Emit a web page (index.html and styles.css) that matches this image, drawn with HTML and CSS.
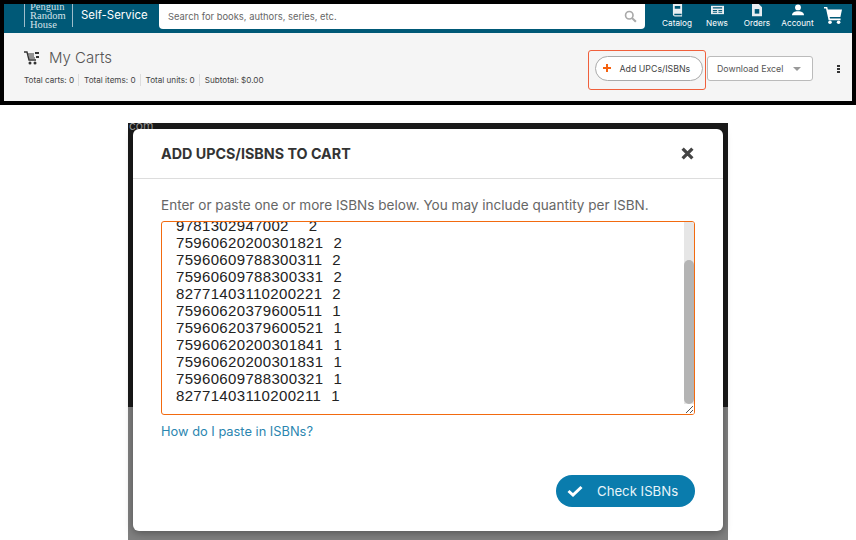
FILE: index.html
```html
<!DOCTYPE html>
<html lang="en">
<head>
    <meta charset="UTF-8">
    <title>Add UPCs/ISBNs to cart</title>
    <link rel="stylesheet" href="styles.css">
</head>
<body>
    <div class="shot-top">
        <header class="topbar">
            <div class="logo">
                <div class="logo-text">Penguin<br>Random<br>House</div>
            </div>
            <div class="brand">Self-Service</div>
            <div class="search">
                <span>Search for books, authors, series, etc.</span>
                <svg class="search-icon" viewBox="0 0 16 16" width="13" height="13"><circle cx="6.5" cy="6.5" r="4.6" fill="none" stroke="#a9a9a9" stroke-width="2"/><path d="M10 10l4.6 4.6" stroke="#a9a9a9" stroke-width="2.6"/></svg>
            </div>
            <nav class="nav">
                <a class="nav-item nav-catalog">
                    <svg viewBox="0 0 12 14" width="11" height="14"><path d="M1 0h10v14H3a2 2 0 0 1-2-2z" fill="#e8eef1"/><path d="M3 2.5h6v3H3zM2.5 11h8v1.6h-8z" fill="#005977"/></svg>
                    Catalog
                </a>
                <a class="nav-item nav-news">
                    <svg viewBox="0 0 14 11" width="13" height="14"><path d="M0 1h14v9H0z" fill="#e8eef1"/><path d="M2 2.5h10v1.5H2zM2 5.5h4.5v1H2zM2 7.5h4.5v1H2zM8 5.5h4v1H8zM8 7.5h4v1H8z" fill="#005977"/></svg>
                    News
                </a>
                <a class="nav-item nav-orders">
                    <svg viewBox="0 0 11 14" width="10" height="14"><path d="M0 0h7l4 4v10H0z" fill="#e8eef1"/><path d="M3 6h5v5H3z" fill="#005977"/></svg>
                    Orders
                </a>
                <a class="nav-item nav-account">
                    <svg viewBox="0 0 14 14" width="12" height="14"><circle cx="7" cy="4" r="3.4" fill="#fff"/><path d="M0 13c0-3 3-4.6 7-4.6s7 1.6 7 4.6z" fill="#fff"/></svg>
                    Account
                </a>
                <svg class="nav-cart" viewBox="0 0 18 17" width="18" height="17"><path d="M0 0h3.2l.7 2.5H18l-1.6 7.5H5.6l.4 1.6h10.6v1.6H4.6L2 1.6H0z" fill="#fff"/><circle cx="6" cy="15.2" r="1.8" fill="#fff"/><circle cx="14.6" cy="15.2" r="1.8" fill="#fff"/></svg>
            </nav>
        </header>
        <section class="subbar">
            <div class="carts-info">
                <h1 class="carts-title">
                    <svg viewBox="0 0 16 14" width="16" height="14"><path d="M0 1h3l2 8h7" fill="none" stroke="#333" stroke-width="1.4"/><path d="M4 3h6M4.6 5h5.4M5 7h6" stroke="#333" stroke-width="1.2"/><path d="M11 1h4v2h-4zM12 5h3v2h-3z" fill="#333"/><circle cx="6" cy="12" r="1.5" fill="#333"/><circle cx="11" cy="12" r="1.5" fill="#333"/></svg>
                    My Carts
                </h1>
                <ul class="totals">
                    <li>Total carts: 0</li>
                    <li>Total items: 0</li>
                    <li>Total units: 0</li>
                    <li>Subtotal: $0.00</li>
                </ul>
            </div>
            <div class="actions">
                <div class="highlight">
                    <button class="btn-add">
                        <svg class="plus" viewBox="0 0 8 8" width="8" height="8"><path d="M4 0v8M0 4h8" stroke="#f5610f" stroke-width="2"/></svg>
                        Add UPCs/ISBNs
                    </button>
                </div>
                <button class="btn-excel">Download Excel<span class="caret"></span></button>
                <span class="kebab"><i></i><i></i><i></i></span>
            </div>
        </section>
    </div>

    <div class="shot-modal">
        <span class="behind-text">com</span>
        <div class="modal">
            <div class="modal-head">
                <h2>ADD UPCS/ISBNS TO CART</h2>
                <svg class="close" viewBox="0 0 12 12" width="13" height="13"><path d="M1.5 1.5l9 9M10.5 1.5l-9 9" stroke="#444" stroke-width="3"/></svg>
            </div>
            <div class="modal-body">
                <p class="hint">Enter or paste one or more ISBNs below. You may include quantity per ISBN.</p>
                <div class="isbn-box">
<pre class="isbn-lines">9781302947002    2
75960620200301821  2
75960609788300311  2
75960609788300331  2
82771403110200221  2
75960620379600511  1
75960620379600521  1
75960620200301841  1
75960620200301831  1
75960609788300321  1
82771403110200211  1</pre>
                    <div class="scroll-track"><div class="scroll-thumb"></div></div>
                    <svg class="grip" viewBox="0 0 10 10" width="10" height="10"><path d="M9 2L2 9M9 6L6 9" stroke="#555" stroke-width="1"/></svg>
                </div>
                <a class="help-link">How do I paste in ISBNs?</a>
            </div>
            <div class="modal-foot">
                <button class="btn-check">
                    <svg viewBox="0 0 16 12" width="16" height="12"><path d="M1.5 6l4.5 4L14.5 2" fill="none" stroke="#fff" stroke-width="3"/></svg>
                    Check ISBNs
                </button>
            </div>
        </div>
    </div>
</body>
</html>
```

FILE: styles.css
```css
* {
    box-sizing: border-box;
}
body {
    margin: 0;
    background-color: #fff;
    font-family: Inter, "Open Sans", sans-serif;
    height: 540px;
    overflow: hidden;
}
.shot-top {
    border: 4px solid #000;
    height: 105px;
    background-color: #f5f5f5;
}
.topbar {
    display: flex;
    align-items: flex-start;
    height: 29px;
    background-color: #005977;
    color: #fff;
    overflow: hidden;
}
.logo {
    margin-left: 20px;
    height: 23px;
    width: 49px;
    border-left: 1px solid #9fbecb;
    border-right: 1px solid #9fbecb;
    padding-left: 5px;
}
.logo-text {
    font-family: "Liberation Serif", serif;
    font-size: 10.5px;
    line-height: 9px;
    margin-top: -2px;
    color: #d5e3e9;
}
.brand {
    margin-left: 8px;
    width: 78px;
    margin-top: 4px;
    font-size: 11.4px;
    line-height: 14px;
    white-space: nowrap;
}
.search {
    width: 486px;
    height: 25px;
    background-color: #fff;
    border-radius: 0 0 4px 4px;
    display: flex;
    align-items: center;
    justify-content: space-between;
    padding: 0 8px 0 9px;
    color: #666;
    font-size: 9.4px;
}
.nav {
    display: flex;
    align-items: flex-start;
    flex: 1;
    padding-left: 17px;
}
.nav-item {
    display: flex;
    flex-direction: column;
    align-items: center;
    font-size: 8.2px;
    line-height: 10px;
    margin-top: -1px;
    gap: 1px;
    white-space: nowrap;
}
.nav-catalog { width: 30px; }
.nav-news { width: 20px; margin-left: 15px; }
.nav-orders { width: 26px; margin-left: 17px; }
.nav-account { width: 33px; margin-left: 11px; }
.nav-cart { margin-left: 10px; margin-top: 3px; }
.subbar {
    display: flex;
    justify-content: space-between;
    height: 68px;
    padding: 0 12px 0 20px;
}
.carts-title {
    display: flex;
    align-items: center;
    gap: 9px;
    margin: 15px 0 0;
    font-size: 15px;
    line-height: 20px;
    font-weight: 300;
    color: #555;
}
.totals {
    display: flex;
    list-style: none;
    margin: 6px 0 0;
    padding: 0;
    font-size: 8.15px;
    line-height: 12px;
    color: #444;
}
.totals li {
    padding-right: 4px;
    margin-right: 5px;
    border-right: 1px solid #ddd;
}
.totals li:last-child {
    border-right: none;
}
.actions {
    display: flex;
    align-items: flex-start;
    margin-top: 17px;
}
.highlight {
    width: 118px;
    height: 40px;
    border: 1.5px solid #f0603c;
    border-radius: 3px;
    padding: 4.5px 0 0 5.5px;
}
.btn-add {
    display: flex;
    align-items: center;
    gap: 9px;
    width: 108px;
    height: 25px;
    padding: 0 0 0 7px;
    border: 1px solid #aaa;
    border-radius: 13px;
    background-color: #fff;
    color: #444;
    font-family: inherit;
    font-size: 8.8px;
}
.btn-excel {
    display: flex;
    align-items: center;
    margin: 6px 0 0 1px;
    width: 106px;
    height: 25px;
    padding: 0 0 0 9px;
    border: 1px solid #bbb;
    border-radius: 3px;
    background-color: #fff;
    color: #555;
    font-family: inherit;
    font-size: 8.8px;
}
.caret {
    margin-left: 10px;
    border: 4px solid transparent;
    border-top: 4px solid #999;
    border-bottom: none;
}
.kebab {
    display: flex;
    flex-direction: column;
    gap: 1px;
    margin: 15px 0 0 24px;
}
.kebab i {
    width: 3px;
    height: 2px;
    background-color: #333;
}
.shot-modal {
    position: relative;
    width: 600px;
    height: 417px;
    margin: 18px 0 0 128px;
    padding: 6px 5px 9px;
    background: linear-gradient(#1a1a1a 284px, #808080 284px);
}
.behind-text {
    position: absolute;
    left: 1px;
    top: -3px;
    font-size: 12px;
    line-height: 11px;
    color: #999;
}
.modal {
    position: relative;
    display: flex;
    flex-direction: column;
    height: 402px;
    background-color: #fff;
    border-radius: 6px;
    box-shadow: 0 2px 8px rgba(0, 0, 0, 0.35);
}
.modal-head {
    display: flex;
    align-items: center;
    justify-content: space-between;
    height: 50px;
    padding: 0 29px 0 28px;
    border-bottom: 1px solid #ddd;
}
.modal-head h2 {
    margin: 0;
    font-size: 14.3px;
    font-weight: 700;
    color: #333;
}
.modal-body {
    padding: 0 28px;
    flex: 1;
}
.hint {
    margin: 17px 0 0;
    font-size: 13.55px;
    line-height: 18px;
    color: #666;
}
.isbn-box {
    position: relative;
    height: 194px;
    margin-top: 7px;
    border: 1px solid #f26a0f;
    border-radius: 3px;
    overflow: hidden;
}
.isbn-lines {
    margin: -5px 0 0 14px;
    font-family: "Liberation Sans", Arial, sans-serif;
    font-size: 15px;
    letter-spacing: 0.33px;
    word-spacing: 0.5px;
    line-height: 17px;
    color: #222;
}
.scroll-track {
    position: absolute;
    top: 0;
    right: 0;
    width: 10px;
    height: 100%;
    background-color: #e6e6e6;
}
.scroll-thumb {
    margin-top: 38px;
    height: 144px;
    background-color: #b4b4b4;
    border-radius: 5px;
}
.grip {
    position: absolute;
    right: 0;
    bottom: 0;
    background-color: #fff;
}
.help-link {
    display: block;
    margin-top: 8px;
    font-size: 12.85px;
    line-height: 17px;
    color: #2b86b0;
}
.modal-foot {
    display: flex;
    justify-content: flex-end;
    padding: 0 28px 24px;
}
.btn-check {
    display: flex;
    align-items: center;
    gap: 14px;
    width: 139px;
    height: 32px;
    padding: 0 0 0 11px;
    border: none;
    border-radius: 16px;
    background-color: #0a7cad;
    color: #e8f4f9;
    font-family: inherit;
    font-size: 13.2px;
}
```
